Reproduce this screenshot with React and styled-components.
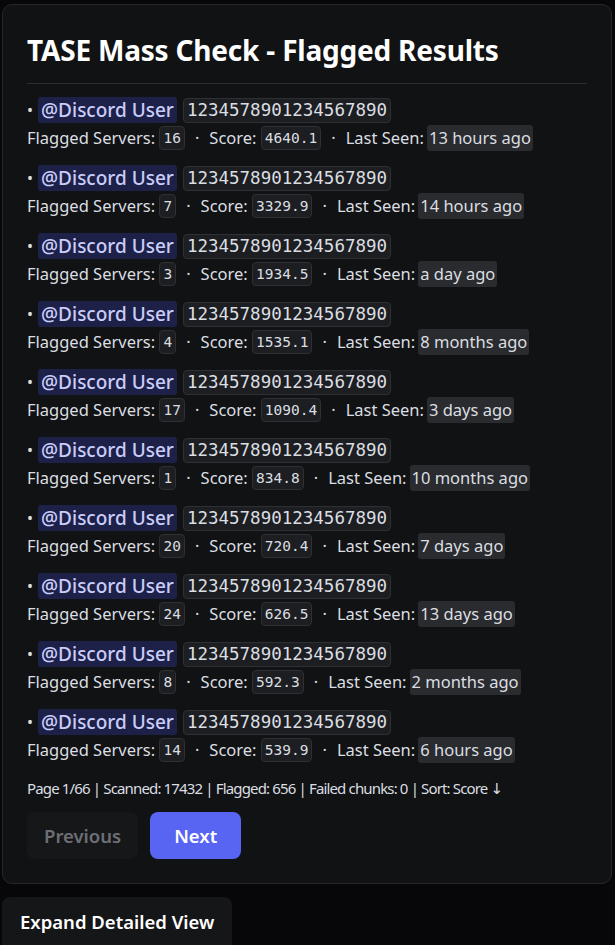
import React from "react";
import styled, { createGlobalStyle } from "styled-components";

const Global = createGlobalStyle`
  html, body { margin: 0; padding: 0; background: #070709; }
  body { font-family: "Noto Sans", "DejaVu Sans", sans-serif; color: #dbdee1; }
`;

const Page = styled.div`
  padding: 4px 3px 0 2px;
  display: flex;
  flex-direction: column;
  align-items: flex-start;
  gap: 13px;
`;

const Card = styled.section`
  box-sizing: border-box;
  width: 610px;
  background: #111214;
  border: 1px solid #26272b;
  border-radius: 10px;
  padding: 28px 24px 24px 24px;
`;

const Title = styled.h1`
  margin: 0;
  font-size: 28px;
  font-weight: 700;
  color: #ffffff;
  line-height: 34px;
  letter-spacing: -0.2px;
`;

const Divider = styled.hr`
  border: 0;
  border-top: 1px solid #2b2d31;
  margin: 16px 0 13px 0;
`;

const List = styled.ul`
  list-style: none;
  margin: 0;
  padding: 0;
  display: flex;
  flex-direction: column;
  gap: 14px;
`;

const Item = styled.li`
  display: flex;
  flex-direction: column;
  gap: 2px;
`;

const Line = styled.div`
  display: flex;
  align-items: center;
  white-space: nowrap;
  font-size: 16.5px;
  line-height: 26px;
  height: 26px;
`;

const Bullet = styled.span`
  font-size: 16px;
  margin-right: 5px;
`;

const Mention = styled.span`
  background: #1e2147;
  color: #c9cdfb;
  border-radius: 3px;
  padding: 0 3px;
  font-size: 19px;
  font-weight: 500;
  line-height: 26px;
  margin-right: 6px;
`;

const Code = styled.code`
  font-family: "DejaVu Sans Mono", "Liberation Mono", monospace;
  font-size: ${(p) => (p.$big ? "17.5px" : "14.5px")};
  line-height: ${(p) => (p.$big ? "23px" : "22px")};
  background: #1d1e21;
  border: 1px solid #2e3035;
  border-radius: 4px;
  padding: 0 3px;
  color: #dbdee1;
`;

const Sep = styled.span`
  margin: 0 10px;
`;

const Stamp = styled.span`
  background: #2a2b2f;
  border-radius: 3px;
  padding: 0 2px;
  margin-left: 3px;
`;

const Footer = styled.div`
  margin-top: 15px;
  font-size: 15px;
  letter-spacing: -0.85px;
  line-height: 20px;
  color: #dbdee1;
`;

const Buttons = styled.div`
  display: flex;
  gap: 12px;
  margin-top: 14px;
`;

const Btn = styled.button`
  font-family: inherit;
  font-size: 18.5px;
  font-weight: 600;
  height: 47px;
  padding: 0 ${(p) => (p.$primary ? "24px" : "17px")};
  border: 0;
  border-radius: 8px;
  background: ${(p) => (p.$primary ? "#5865f2" : "#161719")};
  color: ${(p) => (p.$primary ? "#ffffff" : "#6d6f75")};
`;

const Expand = styled.button`
  font-family: inherit;
  font-size: 18.5px;
  font-weight: 600;
  height: 48px;
  padding: 0 18px;
  border: 0;
  border-radius: 8px 8px 0 0;
  background: #151618;
  color: #ffffff;
`;

const rows = [
  [16, "4640.1", "13 hours ago"],
  [7, "3329.9", "14 hours ago"],
  [3, "1934.5", "a day ago"],
  [4, "1535.1", "8 months ago"],
  [17, "1090.4", "3 days ago"],
  [1, "834.8", "10 months ago"],
  [20, "720.4", "7 days ago"],
  [24, "626.5", "13 days ago"],
  [8, "592.3", "2 months ago"],
  [14, "539.9", "6 hours ago"],
];

export default function App() {
  return (
    <>
      <Global />
      <Page>
        <Card>
          <Title>TASE Mass Check - Flagged Results</Title>
          <Divider />
          <List>
            {rows.map(([srv, score, seen], i) => (
              <Item key={i}>
                <Line>
                  <Bullet>•</Bullet>
                  <Mention>@Discord User</Mention>
                  <Code $big>1234578901234567890</Code>
                </Line>
                <Line>
                  Flagged Servers:&nbsp;<Code>{srv}</Code>
                  <Sep>·</Sep>
                  Score:&nbsp;<Code>{score}</Code>
                  <Sep>·</Sep>
                  Last Seen:<Stamp>{seen}</Stamp>
                </Line>
              </Item>
            ))}
          </List>
          <Footer>
            Page 1/66 | Scanned: 17432 | Flagged: 656 | Failed chunks: 0 | Sort: Score ↓
          </Footer>
          <Buttons>
            <Btn>Previous</Btn>
            <Btn $primary>Next</Btn>
          </Buttons>
        </Card>
        <Expand>Expand Detailed View</Expand>
      </Page>
    </>
  );
}
